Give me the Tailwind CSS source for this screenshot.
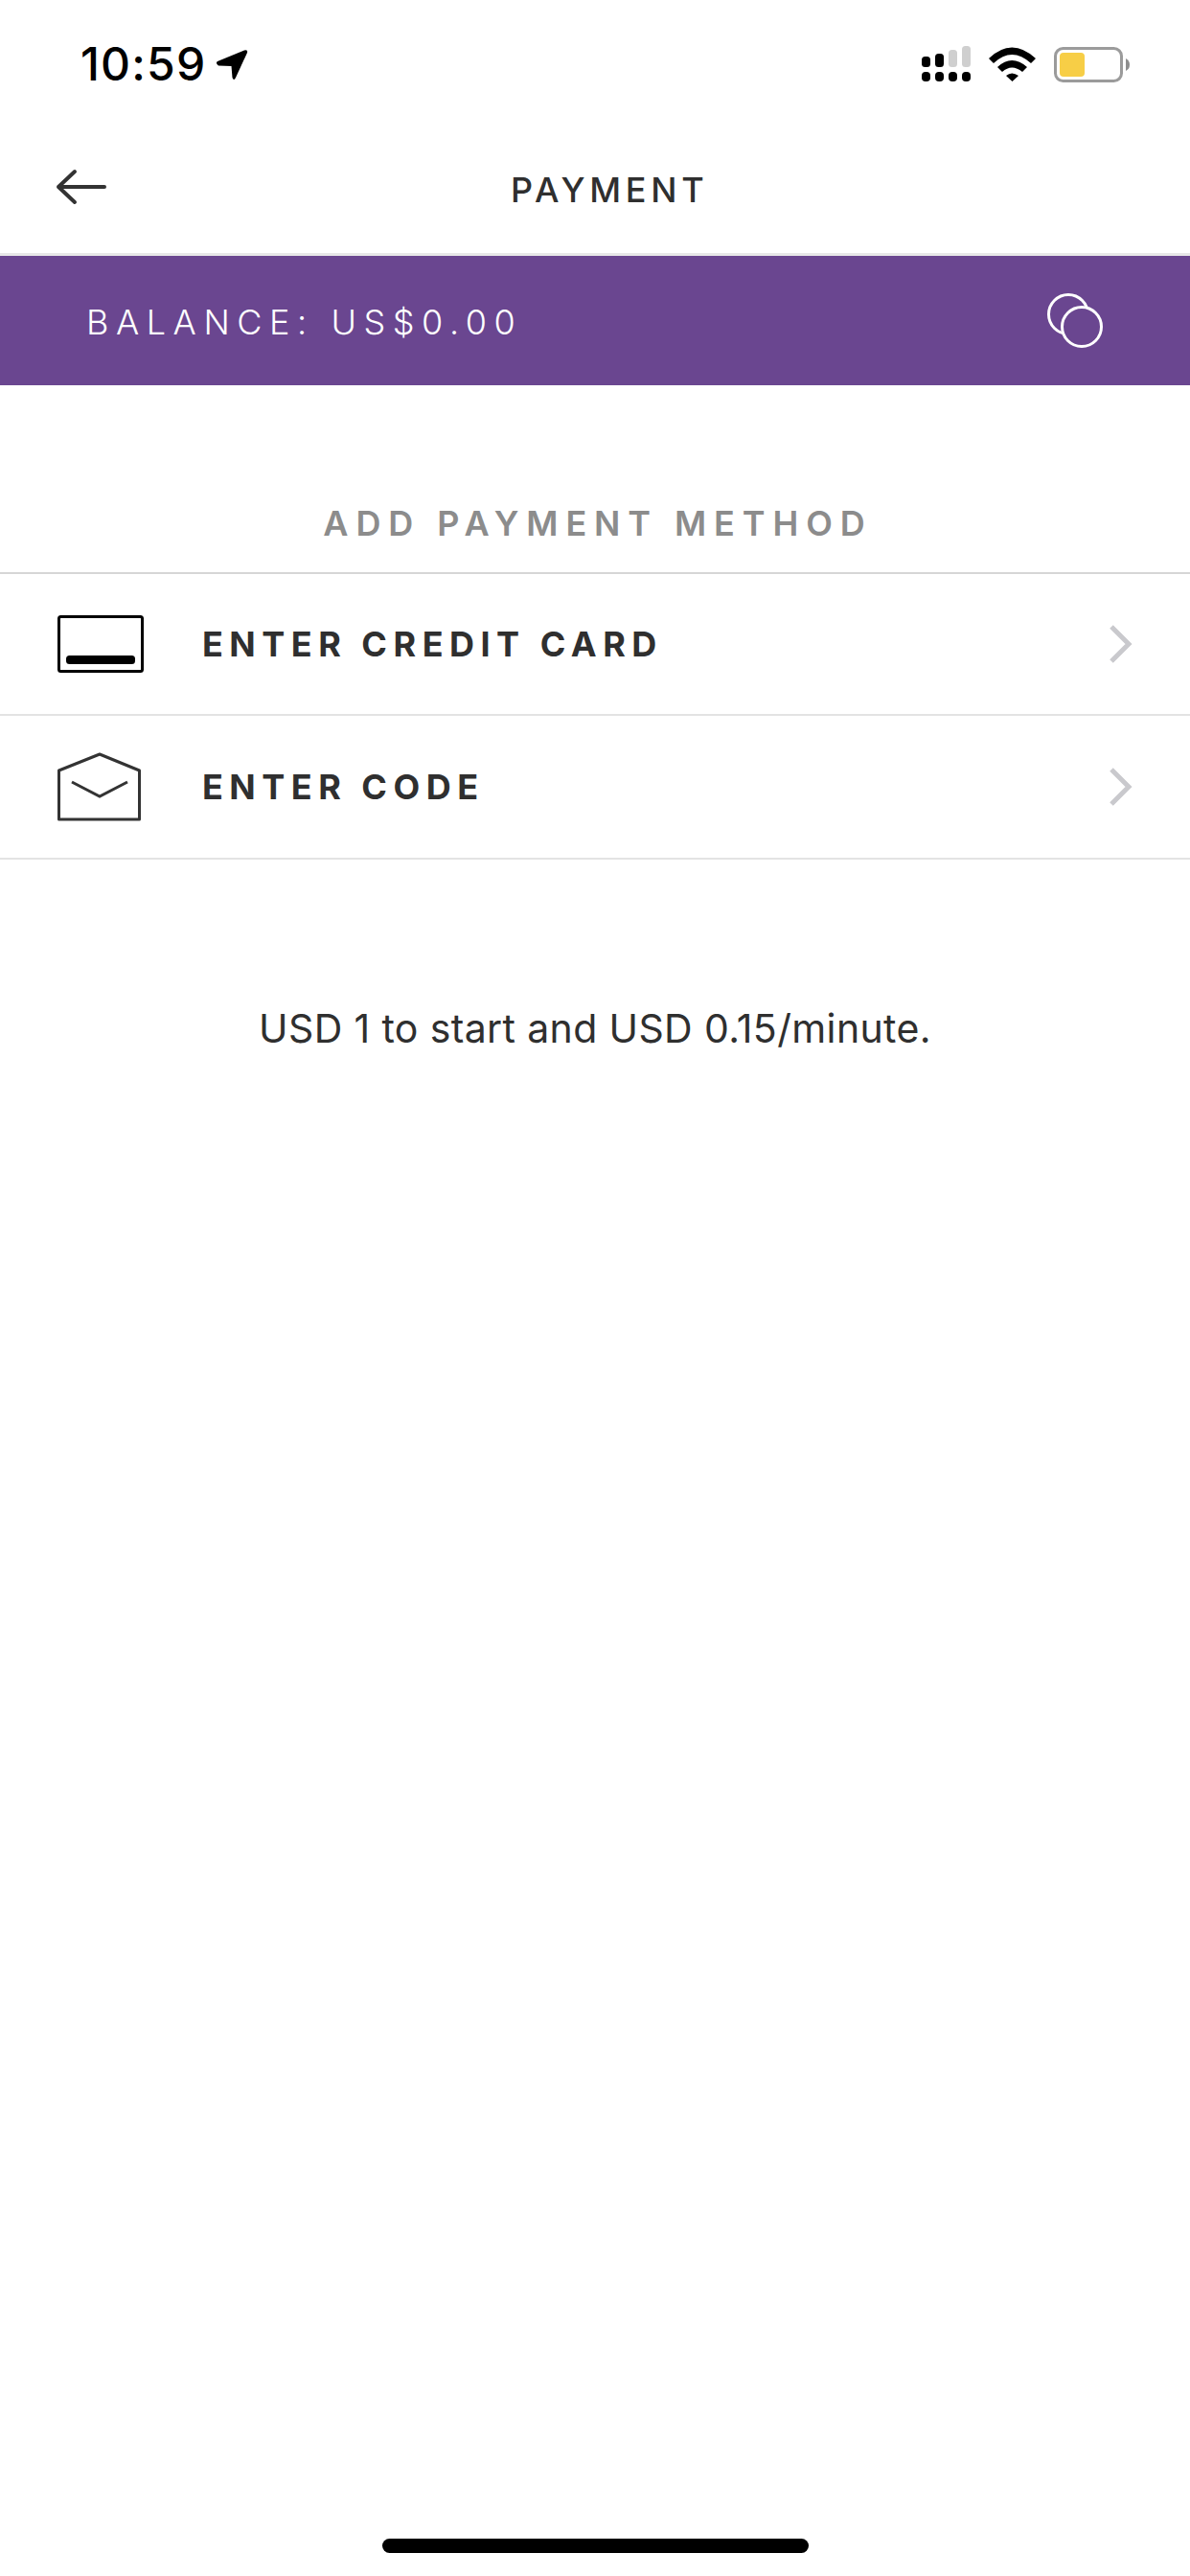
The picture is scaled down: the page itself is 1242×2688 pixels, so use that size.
<!DOCTYPE html>
<html lang="en">
<head>
    <meta charset="UTF-8">
    <meta name="viewport" content="width=device-width, initial-scale=1.0">
    <title>Payment</title>
    <script src="https://cdn.jsdelivr.net/npm/@tailwindcss/browser@4"></script>
</head>
<body class="bg-white font-['Inter',sans-serif] text-[#2f2f2f]">
<div class="w-[1242px] h-[2688px] flex flex-col overflow-hidden">

    <!-- Status bar -->
    <div class="h-[132px] flex justify-between items-start">
        <div class="flex items-center pl-[84px] pt-[41px] gap-[10px]">
            <span class="text-[48px] leading-[52px] font-medium text-black tracking-[1.2px]">10:59</span>
            <svg class="w-[34px] h-[34px]" viewBox="0 0 34 34">
                <path d="M2 14 L30 2.500 Q34 1.500 33 5 L21 31 Q19 35 17.500 31 L16.500 19 L3 18.500 Q-0.500 16 2 14 Z" fill="#000"/>
            </svg>
        </div>
        <svg class="mt-[44px] mr-[62px]" width="220" height="46" viewBox="958 44 220 46">
            <rect x="960" y="59" width="9" height="11" rx="3.500"/>
            <rect x="974" y="56" width="9" height="14" rx="3.500"/>
            <rect x="988" y="52" width="9" height="18" rx="3.500" fill="#cfcfcf"/>
            <rect x="1002" y="48" width="9" height="22" rx="3.500" fill="#cfcfcf"/>
            <rect x="960" y="75" width="9" height="10" rx="4"/>
            <rect x="974" y="75" width="9" height="10" rx="4"/>
            <rect x="988" y="75" width="9" height="10" rx="4"/>
            <rect x="1002" y="75" width="9" height="10" rx="4"/>
            <path d="M1030 61 Q1054 38 1079 61 L1074 66 Q1054 48 1035 66 Z"/>
            <path d="M1039 70 Q1054 56 1070 70 L1065 75 Q1054 66 1044 75 Z"/>
            <path d="M1048 79 Q1054 74 1061 79 L1054.500 85 Z"/>
            <rect x="1099.500" y="50.500" width="69" height="34" rx="8" fill="none" stroke="#9b9b9b" stroke-width="3"/>
            <rect x="1104" y="55" width="26" height="25" rx="4" fill="#f7ce46"/>
            <path d="M1173 61 Q1177 63 1177 67.500 Q1177 72 1173 74 Z" fill="#8e8e8e"/>
        </svg>
    </div>

    <!-- Header -->
    <div class="h-[135px] flex items-center relative border-b-[3px] border-[#e8e8e8] pb-[6px]">
        <svg class="ml-[58px]" width="54" height="38" viewBox="0 0 54 38">
            <path d="M3 19 H51 M20 3 L3 19 L20 35" fill="none" stroke="#333" stroke-width="4" stroke-linecap="round" stroke-linejoin="round"/>
        </svg>
        <div class="absolute left-[533px] top-[45px] text-[36px] leading-[42px] font-medium tracking-[4.700px] whitespace-nowrap">PAYMENT</div>
    </div>

    <!-- Balance -->
    <div class="h-[135px] bg-[#6a4690] flex items-center justify-between pl-[90px] pr-[91px]">
        <span class="text-[36px] font-light tracking-[7.550px] text-white pt-[3px]">BALANCE: US$0.00</span>
        <svg width="58" height="58" viewBox="0 0 58 58">
            <circle cx="22" cy="22" r="20.500" fill="none" stroke="#fff" stroke-width="3"/>
            <circle cx="36" cy="35" r="20.500" fill="#6a4690" stroke="#fff" stroke-width="3"/>
        </svg>
    </div>

    <!-- Add payment method -->
    <div class="h-[197px] flex items-end justify-center pb-[29px] pl-[6px] border-b-2 border-[#d6d6d6]">
        <span class="text-[36px] leading-[44px] font-semibold tracking-[7.900px] text-[#8c8c8c]">ADD PAYMENT METHOD</span>
    </div>

    <div class="h-[148px] flex items-center border-b-2 border-[#e3e3e3] pl-[60px] pr-[60px]">
        <svg class="w-[90px] h-[60px] shrink-0" viewBox="0 0 90 60">
            <rect x="1.500" y="1.500" width="87" height="57" rx="2" fill="none" stroke="#000" stroke-width="3"/>
            <rect x="9" y="42" width="72" height="9" rx="3.500" fill="#000"/>
        </svg>
        <span class="ml-[61px] text-[36px] font-bold tracking-[6.500px]">ENTER CREDIT CARD</span>
        <svg class="ml-auto w-[24px] h-[40px]" viewBox="0 0 24 40">
            <path d="M2 2 L20 20 L2 38" fill="none" stroke="#c9c9cd" stroke-width="5"/>
        </svg>
    </div>

    <div class="h-[150px] flex items-center border-b-2 border-[#e3e3e3] pl-[60px] pr-[60px]">
        <svg class="w-[90px] h-[72px] shrink-0" viewBox="0 0 90 72">
            <path d="M1.500 19 L44 2 L85.500 19 V70 H1.500 Z" fill="none" stroke="#333" stroke-width="3" stroke-linejoin="round"/>
            <path d="M15 31 L44 46 L73 31" fill="none" stroke="#333" stroke-width="3"/>
        </svg>
        <span class="ml-[61px] text-[36px] font-bold tracking-[6.500px]">ENTER CODE</span>
        <svg class="ml-auto w-[24px] h-[40px]" viewBox="0 0 24 40">
            <path d="M2 2 L20 20 L2 38" fill="none" stroke="#c9c9cd" stroke-width="5"/>
        </svg>
    </div>

    <p class="mt-[150px] text-center text-[41px] leading-[52px] tracking-[0.37px]">USD 1 to start and USD 0.15/minute.</p>

    <!-- Home indicator -->
    <div class="mt-auto mb-[24px] mx-auto w-[445px] h-[15px] rounded-full bg-black"></div>
</div>
</body>
</html>
